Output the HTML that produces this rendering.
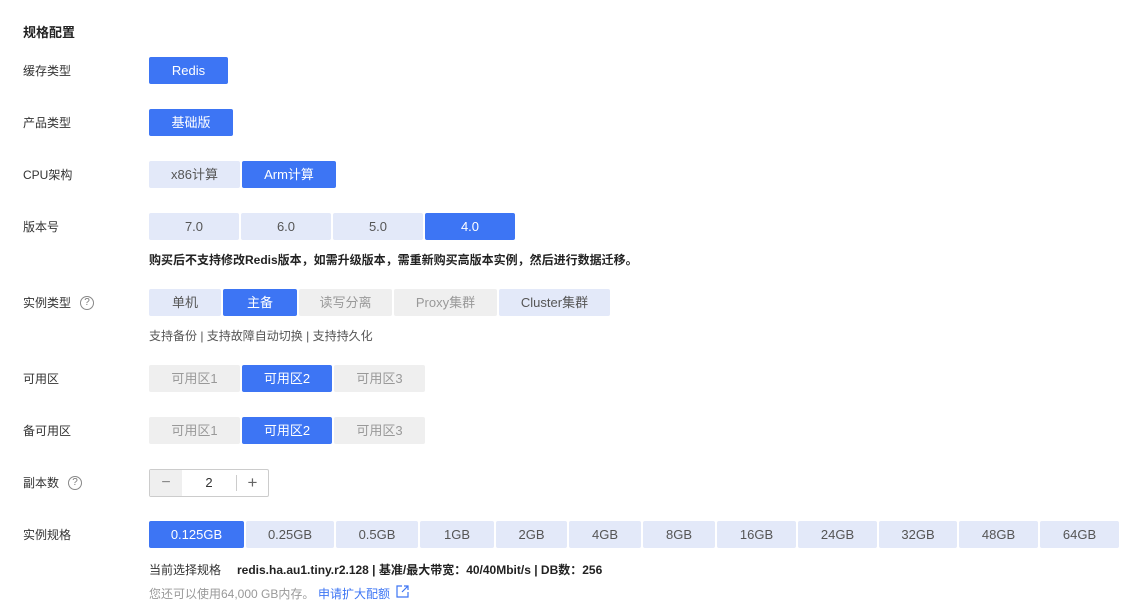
<!DOCTYPE html>
<html><head><meta charset="utf-8"><style>
*{margin:0;padding:0;box-sizing:border-box}
body{width:1140px;height:610px;background:#fff;position:relative;font-family:"Liberation Sans","Noto Sans CJK SC",sans-serif;font-size:12px;color:#333;overflow:hidden}
.a{position:absolute;white-space:nowrap}
.lbl{position:absolute;left:23px;line-height:14px}
.b{position:absolute;height:27px;line-height:27px;text-align:center;border-radius:2px;font-size:13px}
.on{background:#3d75f4;color:#fff}
.lt{background:#e3e9f9;color:#555}
.gy{background:#efefef;color:#999}
.q{position:absolute;width:14px;height:14px;border:1px solid #888;border-radius:50%;font-size:10px;line-height:12px;text-align:center;color:#777}
</style></head><body>
<div class="a" style="left:23px;top:22px;font-size:13px;font-weight:bold;color:#222">规格配置</div>

<div class="lbl" style="top:64px">缓存类型</div>
<div class="b on" style="left:149px;top:57px;width:79px">Redis</div>

<div class="lbl" style="top:116px">产品类型</div>
<div class="b on" style="left:149px;top:109px;width:84px">基础版</div>

<div class="lbl" style="top:168px">CPU架构</div>
<div class="b lt" style="left:149px;top:161px;width:91px">x86计算</div>
<div class="b on" style="left:242px;top:161px;width:94px">Arm计算</div>

<div class="lbl" style="top:220px">版本号</div>
<div class="b lt" style="left:149px;top:213px;width:90px">7.0</div>
<div class="b lt" style="left:241px;top:213px;width:90px">6.0</div>
<div class="b lt" style="left:333px;top:213px;width:90px">5.0</div>
<div class="b on" style="left:425px;top:213px;width:90px">4.0</div>
<div class="a" style="left:149px;top:251px;font-weight:bold;color:#222">购买后不支持修改Redis版本，如需升级版本，需重新购买高版本实例，然后进行数据迁移。</div>

<div class="lbl" style="top:296px">实例类型</div>
<div class="q" style="left:80px;top:296px">?</div>
<div class="b lt" style="left:149px;top:289px;width:72px">单机</div>
<div class="b on" style="left:223px;top:289px;width:74px">主备</div>
<div class="b gy" style="left:299px;top:289px;width:93px">读写分离</div>
<div class="b gy" style="left:394px;top:289px;width:103px">Proxy集群</div>
<div class="b lt" style="left:499px;top:289px;width:111px">Cluster集群</div>
<div class="a" style="left:149px;top:327px;color:#555">支持备份 | 支持故障自动切换 | 支持持久化</div>

<div class="lbl" style="top:372px">可用区</div>
<div class="b gy" style="left:149px;top:365px;width:91px">可用区1</div>
<div class="b on" style="left:242px;top:365px;width:90px">可用区2</div>
<div class="b gy" style="left:334px;top:365px;width:91px">可用区3</div>

<div class="lbl" style="top:424px">备可用区</div>
<div class="b gy" style="left:149px;top:417px;width:91px">可用区1</div>
<div class="b on" style="left:242px;top:417px;width:90px">可用区2</div>
<div class="b gy" style="left:334px;top:417px;width:91px">可用区3</div>

<div class="lbl" style="top:476px">副本数</div>
<div class="q" style="left:68px;top:476px">?</div>
<div class="a" style="left:149px;top:469px;width:120px;height:28px;border:1px solid #ccc;border-radius:2px;background:#fff">
 <div class="a" style="left:0;top:0;width:32px;height:26px;background:#efefef;line-height:26px;text-align:center;font-size:16px;color:#888">−</div>
 <div class="a" style="left:32px;top:0;width:54px;height:26px;line-height:26px;text-align:center;font-size:13px;color:#333">2</div>
 <div class="a" style="left:86px;top:5px;width:1px;height:16px;background:#ccc"></div>
 <div class="a" style="left:87px;top:0;width:31px;height:26px;line-height:26px;text-align:center;font-size:17px;color:#666">+</div>
</div>

<div class="lbl" style="top:528px">实例规格</div>
<div class="b on" style="left:149px;top:521px;width:95px">0.125GB</div>
<div class="b lt" style="left:246px;top:521px;width:88px">0.25GB</div>
<div class="b lt" style="left:336px;top:521px;width:82px">0.5GB</div>
<div class="b lt" style="left:420px;top:521px;width:74px">1GB</div>
<div class="b lt" style="left:496px;top:521px;width:71px">2GB</div>
<div class="b lt" style="left:569px;top:521px;width:72px">4GB</div>
<div class="b lt" style="left:643px;top:521px;width:72px">8GB</div>
<div class="b lt" style="left:717px;top:521px;width:79px">16GB</div>
<div class="b lt" style="left:798px;top:521px;width:79px">24GB</div>
<div class="b lt" style="left:879px;top:521px;width:78px">32GB</div>
<div class="b lt" style="left:959px;top:521px;width:79px">48GB</div>
<div class="b lt" style="left:1040px;top:521px;width:79px">64GB</div>
<div class="a" style="left:149px;top:561px;color:#333">当前选择规格</div>
<div class="a" style="left:237px;top:561px;font-weight:bold;color:#222">redis.ha.au1.tiny.r2.128 | 基准/最大带宽：40/40Mbit/s | DB数：256</div>
<div class="a" style="left:149px;top:585px;color:#999">您还可以使用64,000 GB内存。</div>
<div class="a" style="left:318px;top:585px;color:#3d75f4">申请扩大配额</div>
<svg class="a" style="left:396px;top:585px" width="13" height="13" viewBox="0 0 13 13" fill="none" stroke="#3d75f4" stroke-width="1.2"><path d="M6 1H1v11h11V7"/><path d="M8 1h4v4M12 1L6 7"/></svg>
</body></html>
